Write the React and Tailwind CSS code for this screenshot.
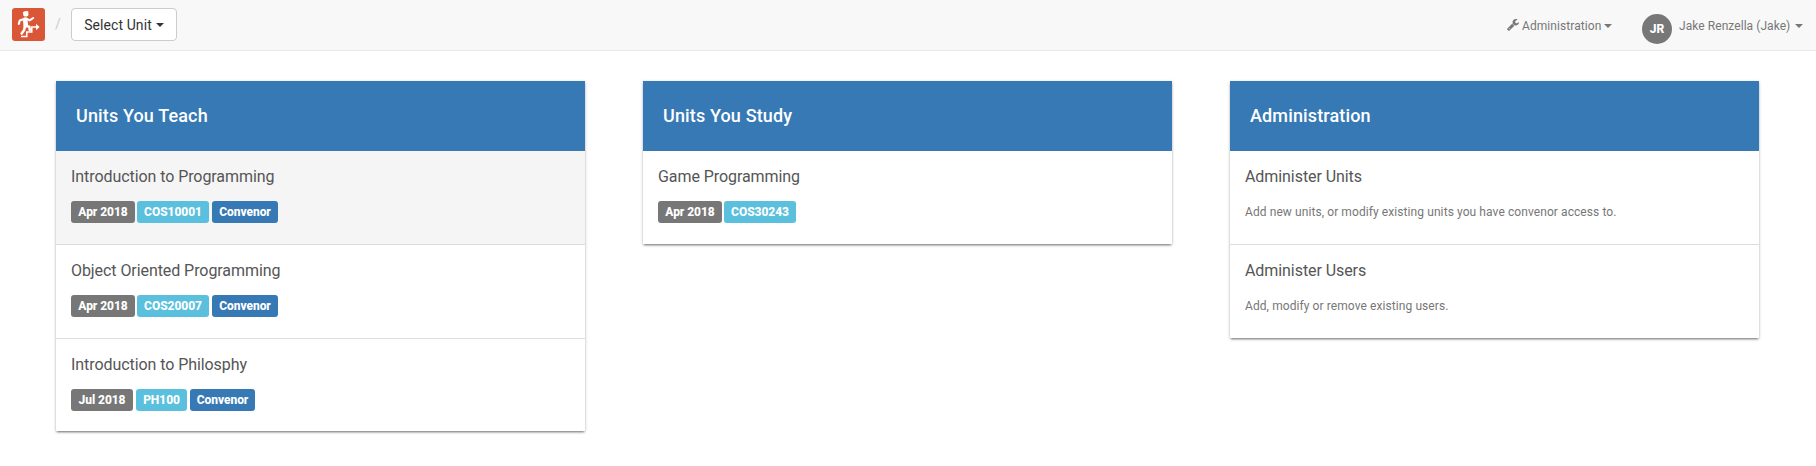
import React from "react";

function Caret({ className = "" }) {
  return <span className={`inline-block h-0 w-0 shrink-0 border-x-4 border-t-4 border-x-transparent ${className}`} />;
}

function Logo() {
  return (
    <svg className="h-[33px] w-[33px] shrink-0" viewBox="0 0 33 33">
      <rect width="33" height="33" rx="3" fill="#d95737" />
      <g fill="none" stroke="#fff" strokeLinejoin="round" strokeLinecap="round">
        <path d="M13.2 11.5L13.8 17.5" strokeWidth="4.6" />
        <path d="M11.8 11L7.8 12.4L6.8 16" strokeWidth="2.1" />
        <path d="M14.5 10.8L17.6 12.4L21.2 10" strokeWidth="2.1" />
        <path d="M14.5 18L17.3 18.6L17.8 22" strokeWidth="2.5" />
        <path d="M12.8 18L12.2 22L9.6 25.6" strokeWidth="2.5" />
        <path d="M9 28.6H14.8V24H19.8V19H25.6" strokeWidth="1.5" strokeLinecap="butt" strokeLinejoin="miter" />
      </g>
      <path d="M24 15.8L27.6 19L24 22.2Z" fill="#fff" />
      <circle cx="13.8" cy="5.9" r="2.7" fill="#fff" />
      <path d="M10.8 4L16 2.9L16.4 4.2L11.2 5.2Z" fill="#fff" />
    </svg>
  );
}

function Wrench() {
  return (
    <svg className="h-3 w-3 shrink-0" viewBox="0 0 1664 1664" fill="#777">
      <path d="M384 1344q0-26-19-45t-45-19-45 19-19 45 19 45 45 19 45-19 19-45zm644-420l-682 682q-37 37-90 37-52 0-91-37l-106-108q-38-36-38-90 0-53 38-91l681-681q39 98 114.500 173.500t173.500 114.500zm634-435q0 39-23 106-47 134-164.500 217.500t-258.500 83.500q-185 0-316.500-131.500t-131.500-316.500 131.500-316.500 316.500-131.500q58 0 121.500 16.500t107.500 46.500q16 11 16 28t-16 28l-293 169v224l193 107q5-3 79-48.500t135.500-81 70.500-35.500q15 0 23.500 10t8.500 25z" />
    </svg>
  );
}

function Badge({ className, children }) {
  return (
    <span className={`flex h-[22px] items-center justify-center rounded-[3px] text-[12px] font-extrabold tracking-[-0.05px] text-white ${className}`}>
      {children}
    </span>
  );
}

function Card({ title, children }) {
  return (
    <section className="w-[529px] shrink-0 bg-white shadow-[0_1px_3px_rgba(0,0,0,0.26),0_2px_2px_-1px_rgba(0,0,0,0.4)]">
      <h2 className="flex h-[70px] items-center bg-[#3679b5] px-5 pb-[2px] text-[18px] font-medium tracking-[0.14px] text-white">{title}</h2>
      <div className="divide-y divide-[#ddd]">{children}</div>
    </section>
  );
}

function Row({ title, className = "h-[94px]", children }) {
  return (
    <div className={`px-[15px] pt-[15px] ${className}`}>
      <h3 className="text-[16px] leading-[22px] tracking-[-0.07px] text-[#555]">{title}</h3>
      <div className="mt-[13px] flex">{children}</div>
    </div>
  );
}

export default function App() {
  return (
    <div className="min-h-[466px] bg-white font-['Roboto',sans-serif] text-[#333]">
      <nav className="flex h-[51px] items-start border-b border-[#e7e7e7] bg-[#f8f8f8] pt-2 pr-[13px] pl-3">
        <Logo />
        <span className="ml-[10px] w-[16px] text-[14px] leading-[32px] text-[#ccc]">/</span>
        <button className="flex h-[33px] w-[106px] items-center rounded border border-[#ccc] bg-white pt-px pl-[11px] text-[14px] text-[#333]">
          <span className="w-[70px] whitespace-nowrap tracking-[0.08px]">Select Unit</span>
          <Caret className="ml-[3px] border-t-[#333]" />
        </button>
        <div className="ml-auto flex h-[34px] items-center text-[12px] text-[#777]">
          <Wrench />
          <span className="ml-[3px] w-[81px] pt-[2px] whitespace-nowrap tracking-[0.08px]">Administration</span>
          <Caret className="mt-[2px] ml-px border-t-[#777]" />
        </div>
        <div className="ml-[30px] flex h-[34px] items-center text-[12px] text-[#777]">
          <span className="mt-[8px] flex h-[30px] w-[30px] items-center justify-center rounded-full bg-[#777] text-[12px] font-extrabold text-white">JR</span>
          <span className="ml-[7px] w-[112px] pt-[2px] whitespace-nowrap tracking-[0.06px]">Jake Renzella (Jake)</span>
          <Caret className="mt-[2px] ml-[4px] border-t-[#777]" />
        </div>
      </nav>

      <main className="flex items-start gap-[58px] pt-[30px] pl-14">
        <Card title="Units You Teach">
          <Row title="Introduction to Programming" className="h-[94px] bg-[#f5f5f5]">
            <Badge className="w-16 bg-[#777]">Apr 2018</Badge>
            <Badge className="ml-[2px] w-[72px] bg-[#5bc0de]">COS10001</Badge>
            <Badge className="ml-[3px] w-[66px] bg-[#3679b5]">Convenor</Badge>
          </Row>
          <Row title="Object Oriented Programming">
            <Badge className="w-16 bg-[#777]">Apr 2018</Badge>
            <Badge className="ml-[2px] w-[72px] bg-[#5bc0de]">COS20007</Badge>
            <Badge className="ml-[3px] w-[66px] bg-[#3679b5]">Convenor</Badge>
          </Row>
          <Row title="Introduction to Philosphy" className="h-[92px]">
            <Badge className="w-[62px] bg-[#777]">Jul 2018</Badge>
            <Badge className="ml-[3px] w-[51px] bg-[#5bc0de]">PH100</Badge>
            <Badge className="ml-[3px] w-[65px] bg-[#3679b5]">Convenor</Badge>
          </Row>
        </Card>

        <Card title="Units You Study">
          <Row title="Game Programming" className="h-[93px]">
            <Badge className="w-16 bg-[#777]">Apr 2018</Badge>
            <Badge className="ml-[2px] w-[72px] bg-[#5bc0de]">COS30243</Badge>
          </Row>
        </Card>

        <Card title="Administration">
          <Row title="Administer Units">
            <p className="text-[12px] leading-[22px] tracking-[0.085px] text-[#777]">Add new units, or modify existing units you have convenor access to.</p>
          </Row>
          <Row title="Administer Users" className="h-[93px]">
            <p className="text-[12px] leading-[22px] tracking-[0.085px] text-[#777]">Add, modify or remove existing users.</p>
          </Row>
        </Card>
      </main>
    </div>
  );
}
